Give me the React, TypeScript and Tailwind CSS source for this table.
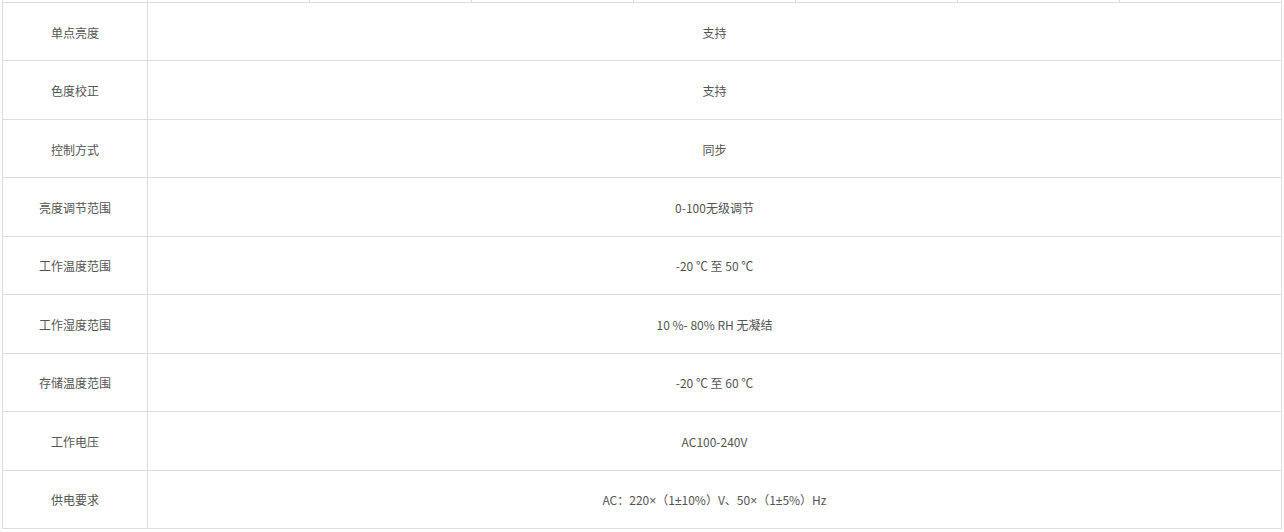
import type { ReactNode } from "react";

// × and ± are full-width in the CJK font; draw them from a Latin font instead
function Sym({ children }: { children: ReactNode }) {
  return <span style={{ fontFamily: '"Liberation Sans", sans-serif' }}>{children}</span>;
}

const rows: { label: string; value: ReactNode }[] = [
  { label: "单点亮度", value: "支持" },
  { label: "色度校正", value: "支持" },
  { label: "控制方式", value: "同步" },
  { label: "亮度调节范围", value: "0-100无级调节" },
  { label: "工作温度范围", value: "-20 ℃ 至 50 ℃" },
  { label: "工作湿度范围", value: "10 %- 80% RH 无凝结" },
  { label: "存储温度范围", value: "-20 ℃ 至 60 ℃" },
  { label: "工作电压", value: "AC100-240V" },
  {
    label: "供电要求",
    value: (
      <>
        AC：220<Sym>×</Sym>（1<Sym>±</Sym>10%）V、50<Sym>×</Sym>（1<Sym>±</Sym>5%）Hz
      </>
    ),
  },
];

export default function App() {
  return (
    <div
      className="w-[1284px] h-[532px] bg-white pl-[2px] overflow-hidden text-[12px] text-[#555]"
      style={{ fontFamily: '"Noto Sans CJK SC", sans-serif' }}
    >
      <div className="w-[1280px] border-l border-r border-[#ddd]">
        {/* tail of the previous row */}
        <div className="flex h-[2px] border-b border-[#ddd] box-content">
          <div className="w-[144px] shrink-0" />
          {Array.from({ length: 7 }).map((_, i) => (
            <div key={i} className="flex-1 border-l border-[#ddd]" />
          ))}
        </div>

        {rows.map((row) => (
          <div key={row.label} className="flex h-[58.44px] border-b border-[#ddd]">
            <div className="w-[144px] shrink-0 flex items-center justify-center pt-[2px]">
              {row.label}
            </div>
            <div className="flex-1 border-l border-[#ddd] flex items-center justify-center pt-[2px]">
              <span>{row.value}</span>
            </div>
          </div>
        ))}
      </div>
    </div>
  );
}
